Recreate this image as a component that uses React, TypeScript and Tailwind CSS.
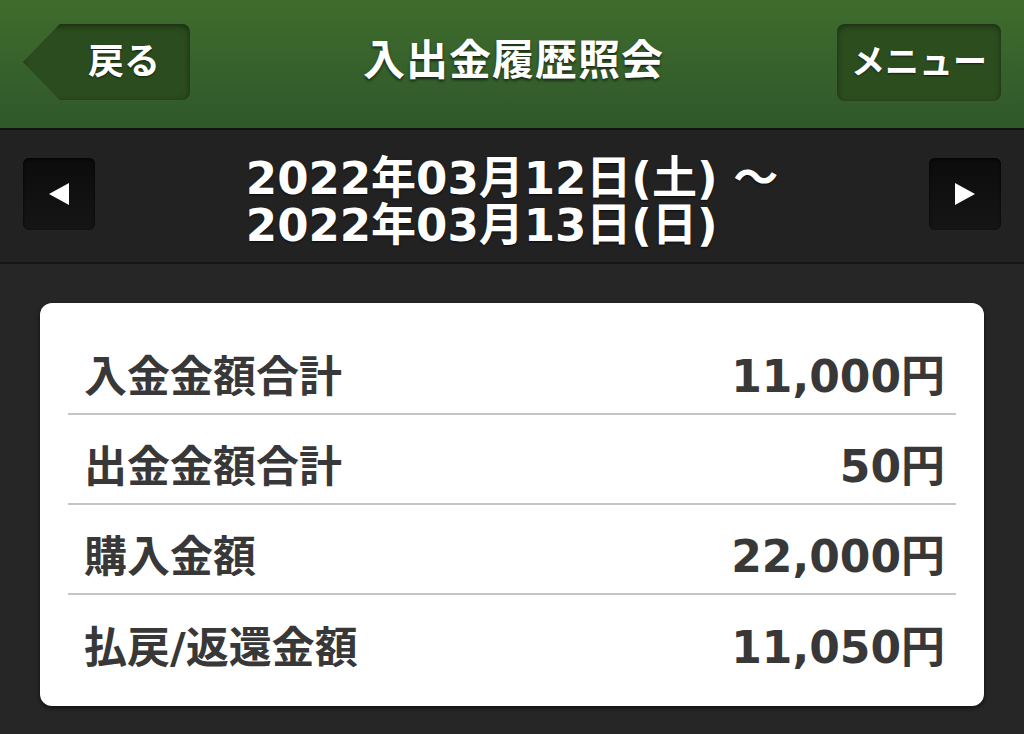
import React from 'react';

const rows = [
  { label: '入金金額合計', value: '11,000円' },
  { label: '出金金額合計', value: '50円' },
  { label: '購入金額', value: '22,000円' },
  { label: '払戻/返還金額', value: '11,050円' },
];

const font = { fontFamily: '"DejaVu Sans", "Noto Sans CJK JP", sans-serif' };

export default function App() {
  return (
    <div className="w-[1024px] h-[734px] bg-[#262626] flex flex-col overflow-hidden" style={font}>
      {/* header */}
      <div className="h-[130px] shrink-0 bg-gradient-to-b from-[#3f6c2d] to-[#30582a] border-b-2 border-[#121212] px-[23px] pb-[4px] flex items-center justify-between">
        <button className="relative w-[167px] h-[76px] bg-[#2b4c1e] [clip-path:polygon(22%_0,100%_0,100%_100%,22%_100%,0_50%)] rounded-r-lg shadow-[inset_0_2px_6px_rgba(0,0,0,0.45)] flex items-center justify-end pr-[30px]">
          <span className="text-white font-bold text-[36px] leading-none [text-shadow:0_1px_2px_rgba(0,0,0,0.6)]">戻る</span>
        </button>
        <h1 className="text-white font-bold text-[42px] leading-none tracking-[1px] -mt-[2px] [text-shadow:0_2px_3px_rgba(0,0,0,0.6)]">入出金履歴照会</h1>
        <button className="w-[164px] h-[77px] rounded-lg bg-[#2c4e1f] shadow-[inset_0_2px_6px_rgba(0,0,0,0.45)] flex items-center justify-center">
          <span className="text-white font-bold text-[34px] leading-none [text-shadow:0_1px_2px_rgba(0,0,0,0.6)]">メニュー</span>
        </button>
      </div>

      {/* date bar */}
      <div className="h-[134px] shrink-0 bg-[#222222] border-b-2 border-[#161616] px-[23px] pb-[4px] flex items-center justify-between">
        <button className="w-[72px] h-[72px] rounded-md bg-gradient-to-b from-[#0c0c0c] to-[#151515] shadow-[inset_0_1px_3px_rgba(0,0,0,0.8)] flex items-center justify-center">
          <svg width="24" height="26" viewBox="0 0 24 26"><polygon points="22,2 22,24 2,13" fill="#fff" /></svg>
        </button>
        <div className="text-white font-bold text-[45px] leading-[47px] text-left translate-y-[8px] [text-shadow:0_1px_2px_rgba(0,0,0,0.7)]">
          <div>2022年03月12日(土) ～</div>
          <div>2022年03月13日(日)</div>
        </div>
        <button className="w-[72px] h-[72px] rounded-md bg-gradient-to-b from-[#0c0c0c] to-[#151515] shadow-[inset_0_1px_3px_rgba(0,0,0,0.8)] flex items-center justify-center">
          <svg width="24" height="26" viewBox="0 0 24 26"><polygon points="2,2 2,24 22,13" fill="#fff" /></svg>
        </button>
      </div>

      {/* card */}
      <div className="pt-[39px] px-10">
        <div className="bg-white rounded-xl shadow-[0_2px_4px_rgba(0,0,0,0.6)] px-7 pt-[22px] pb-[21px]">
          {rows.map((r, i) => (
            <div
              key={r.label}
              className={`h-[90px] flex items-center justify-between pl-4 pr-[11px] pt-[16px] ${i < rows.length - 1 ? 'border-b-2 border-[#c4c4c4]' : ''}`}
            >
              <span className="text-[#383838] font-bold text-[43px] leading-none">{r.label}</span>
              <span className="text-[#383838] font-bold text-[44px] leading-none">{r.value}</span>
            </div>
          ))}
        </div>
      </div>
    </div>
  );
}
